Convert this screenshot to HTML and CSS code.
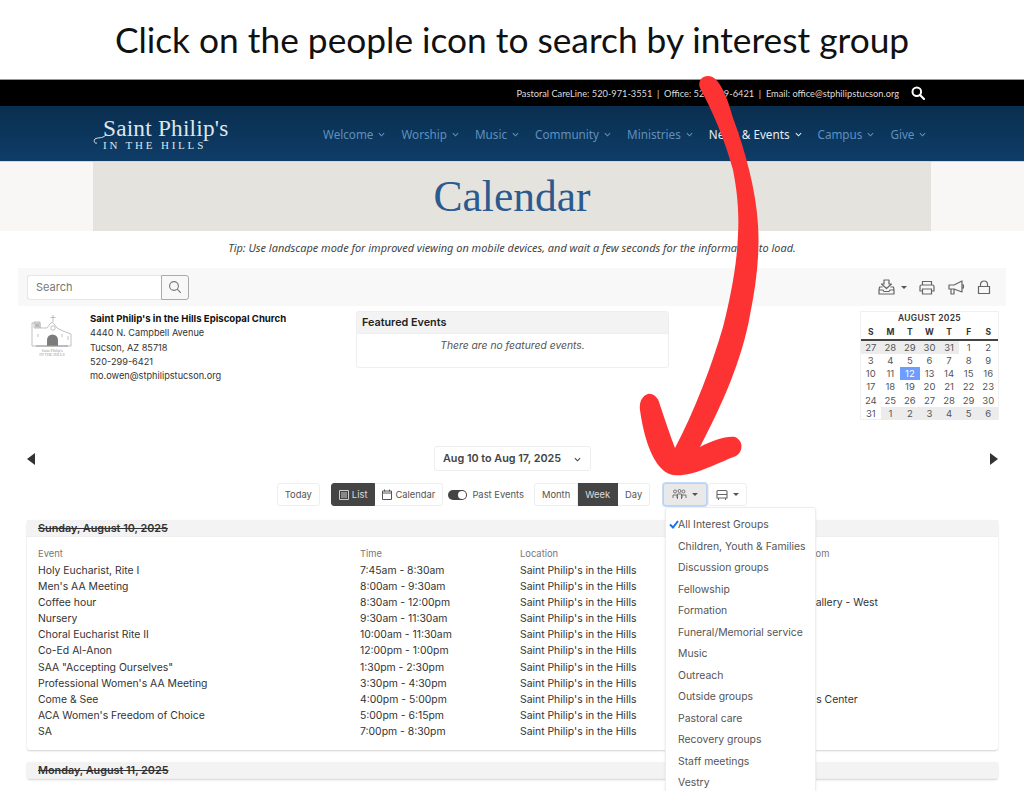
FILE: index.html
```html
<!DOCTYPE html>
<html lang="en">
<head>
  <meta charset="UTF-8" />
  <title>Calendar - Saint Philip's in the Hills</title>
  <link rel="stylesheet" href="styles.css">
</head>
<body>
  <!-- Instruction banner -->
  <div class="banner">Click on the people icon to search by interest group</div>

  <!-- Site header -->
  <div class="topbar">
    <span>Pastoral CareLine: 520-971-3551 &nbsp;|&nbsp; Office: 520-299-6421 &nbsp;|&nbsp; Email: office@stphilipstucson.org</span>
    <svg class="topbar-search" width="14" height="14" viewBox="0 0 14 14"><circle cx="5.8" cy="5.8" r="4.3" fill="none" stroke="#fff" stroke-width="2"/><path d="M9 9l4 4" stroke="#fff" stroke-width="2.2" stroke-linecap="round"/></svg>
  </div>
  <div class="nav">
    <div class="logo">
      <svg class="logo-swash" width="14" height="16" viewBox="0 0 14 16"><path d="M13 4C9 8 5 6 2 8C0 10 2 13 4 12" fill="none" stroke="#dfe6ec" stroke-width="1"/></svg>
      <div class="logo-name">Saint Philip's</div>
      <div class="logo-sub">IN THE HILLS</div>
    </div>
    <div class="nav-items">
      <a class="nav-item">Welcome<svg class="chev" viewBox="0 0 8 5"><path d="M1 1l3 3 3-3"/></svg></a>
      <a class="nav-item">Worship<svg class="chev" viewBox="0 0 8 5"><path d="M1 1l3 3 3-3"/></svg></a>
      <a class="nav-item">Music<svg class="chev" viewBox="0 0 8 5"><path d="M1 1l3 3 3-3"/></svg></a>
      <a class="nav-item">Community<svg class="chev" viewBox="0 0 8 5"><path d="M1 1l3 3 3-3"/></svg></a>
      <a class="nav-item">Ministries<svg class="chev" viewBox="0 0 8 5"><path d="M1 1l3 3 3-3"/></svg></a>
      <a class="nav-item active">News &amp; Events<svg class="chev" viewBox="0 0 8 5"><path d="M1 1l3 3 3-3"/></svg></a>
      <a class="nav-item">Campus<svg class="chev" viewBox="0 0 8 5"><path d="M1 1l3 3 3-3"/></svg></a>
      <a class="nav-item">Give<svg class="chev" viewBox="0 0 8 5"><path d="M1 1l3 3 3-3"/></svg></a>
    </div>
  </div>
  <div class="hero">
    <div class="hero-inner"><h1>Calendar</h1></div>
  </div>
  <p class="tip">Tip: Use landscape mode for improved viewing on mobile devices, and wait a few seconds for the information to load.</p>

  <div class="calendar-page">
    <!-- Search and actions -->
    <div class="toolbar">
      <div class="search">
        <div class="search-input">Search</div>
        <div class="search-btn">
          <svg width="14" height="14" viewBox="0 0 14 14"><circle cx="6" cy="6" r="4.4" fill="none" stroke="#777" stroke-width="1.1"/><path d="M9.2 9.2l3.6 3.6" stroke="#777" stroke-width="1.1"/></svg>
        </div>
      </div>
      <div class="tools">
        <svg class="tool-download" width="17" height="16" viewBox="0 0 17 16"><path d="M6 1h5v4h2.500L8.500 9.500 3.500 5H6zM4.500 8H1.500L1 11v4h15v-4l-.5-3h-3M1 11h4l1 1.500h5l1-1.500h4" fill="none" stroke="#666" stroke-width="1.2" stroke-linejoin="round"/></svg>
        <span class="caret tool-caret"></span>
        <svg class="tool-print" width="16" height="15" viewBox="0 0 16 15"><path d="M3.500 5V1.500h9V5M3.500 11H1V6.500A1.500 1.500 0 0 1 2.500 5h11A1.500 1.500 0 0 1 15 6.500V11h-2.500M3.500 9h9v5h-9z" fill="none" stroke="#666" stroke-width="1.2"/></svg>
        <svg class="tool-horn" width="16" height="15" viewBox="0 0 16 15"><path d="M1 5h5l8-4v11L6 9H1zM3 9v5h3V9M14 5h1.500v3H14" fill="none" stroke="#666" stroke-width="1.2" stroke-linejoin="round"/></svg>
        <svg class="tool-lock" width="14" height="15" viewBox="0 0 14 15"><path d="M1.500 6.500h11v7h-11zM3.500 6.500V4.500a3.500 3.500 0 0 1 7 0v2" fill="none" stroke="#666" stroke-width="1.2"/></svg>
      </div>
    </div>

    <!-- Church info, featured events, mini calendar -->
    <div class="info-row">
      <svg class="church" width="44" height="44" viewBox="0 0 44 44">
        <g fill="none" stroke="#999" stroke-width=".7">
          <path d="M2 8h8v5h7l3-4 2-2 2 2 3 4 6 3 8 3v12H2z"/>
          <path d="M23 0v7M20.500 2.500h5"/>
          <circle cx="23" cy="13" r="2.200"/>
          <path d="M4 7h6v6H4zM32 19v3M8 19v3M38 21v4"/>
        </g>
        <rect x="5" y="8.500" width="4" height="4" fill="#aaa"/>
        <path d="M17 31v-6a5.500 5.500 0 0 1 11 0v6z" fill="#666"/>
        <path d="M6 31h32" stroke="#888" stroke-width="1"/>
        <text x="22" y="37" text-anchor="middle" class="church-text">Saint Philip's</text>
        <text x="22" y="41" text-anchor="middle" class="church-text">IN THE HILLS</text>
      </svg>
      <div class="address">
        <b>Saint Philip's in the Hills Episcopal Church</b>
        <div>4440 N. Campbell Avenue</div>
        <div>Tucson, AZ 85718</div>
        <div>520-299-6421</div>
        <div>mo.owen@stphilipstucson.org</div>
      </div>
      <div class="featured">
        <div class="featured-head">Featured Events</div>
        <div class="featured-body">There are no featured events.</div>
      </div>
      <div class="mini-cal">
        <div class="mini-title">AUGUST 2025</div>
        <div class="mini-grid mini-days"><span>S</span><span>M</span><span>T</span><span>W</span><span>T</span><span>F</span><span>S</span></div>
        <div class="mini-grid">
          <span class="off">27</span><span class="off">28</span><span class="off">29</span><span class="off">30</span><span class="off">31</span><span>1</span><span>2</span>
          <span>3</span><span>4</span><span>5</span><span>6</span><span>7</span><span>8</span><span>9</span>
          <span>10</span><span>11</span><span class="today">12</span><span>13</span><span>14</span><span>15</span><span>16</span>
          <span>17</span><span>18</span><span>19</span><span>20</span><span>21</span><span>22</span><span>23</span>
          <span>24</span><span>25</span><span>26</span><span>27</span><span>28</span><span>29</span><span>30</span>
          <span>31</span><span class="off">1</span><span class="off">2</span><span class="off">3</span><span class="off">4</span><span class="off">5</span><span class="off">6</span>
        </div>
      </div>
    </div>

    <!-- Date range -->
    <div class="date-row">
      <span class="tri-left"></span>
      <div class="date-pick">Aug 10 to Aug 17, 2025<svg class="chev date-chev" viewBox="0 0 8 5"><path d="M1 1l3 3 3-3"/></svg></div>
      <span class="tri-right"></span>
    </div>

    <!-- View controls -->
    <div class="controls">
      <div class="btn today-btn">Today</div>
      <div class="btn-group view-group">
        <div class="btn dark"><svg width="10" height="10" viewBox="0 0 10 10"><path d="M.5.500h9v9h-9zM2 3h6M2 5h6M2 7h6" fill="none" stroke="#ccc" stroke-width="1"/></svg>List</div>
        <div class="btn"><svg width="10" height="11" viewBox="0 0 10 11"><path d="M.5 2h9v8.500h-9zM.5 4h9M2.500.500v2M7.500.500v2" fill="none" stroke="#555" stroke-width="1"/></svg>Calendar</div>
      </div>
      <div class="past"><span class="toggle"></span>Past Events</div>
      <div class="btn-group">
        <div class="btn">Month</div>
        <div class="btn dark">Week</div>
        <div class="btn">Day</div>
      </div>
      <div class="btn icon-btn focused">
        <svg width="15" height="12" viewBox="0 0 15 12"><g fill="none" stroke="#666" stroke-width=".9"><circle cx="3" cy="2.500" r="1.500"/><circle cx="7.500" cy="2" r="1.500"/><circle cx="11.500" cy="2.500" r="1.500"/><path d="M1 9V6h4v3M5.500 10V5h4v5M10 9V6h4v3"/></g></svg>
        <span class="caret"></span>
      </div>
      <div class="btn icon-btn bus-btn">
        <svg width="12" height="12" viewBox="0 0 12 12"><path d="M2 1.500h8a1 1 0 0 1 1 1V9H1V2.500a1 1 0 0 1 1-1zM1 5.500h10M2.500 9v2M9.500 9v2" fill="none" stroke="#666" stroke-width="1.100"/></svg>
        <span class="caret"></span>
      </div>
    </div>

    <!-- Event list -->
    <div class="day-card">
      <div class="day-head">Sunday, August 10, 2025</div>
      <div class="day-body">
        <div class="ev-row ev-label"><span>Event</span><span>Time</span><span>Location</span><span class="room-head">Room</span></div>
        <div class="ev-row"><span>Holy Eucharist, Rite I</span><span>7:45am - 8:30am</span><span>Saint Philip's in the Hills</span></div>
        <div class="ev-row"><span>Men's AA Meeting</span><span>8:00am - 9:30am</span><span>Saint Philip's in the Hills</span></div>
        <div class="ev-row"><span>Coffee hour</span><span>8:30am - 12:00pm</span><span>Saint Philip's in the Hills</span><span class="room-gallery">Gallery - West</span></div>
        <div class="ev-row"><span>Nursery</span><span>9:30am - 11:30am</span><span>Saint Philip's in the Hills</span></div>
        <div class="ev-row"><span>Choral Eucharist Rite II</span><span>10:00am - 11:30am</span><span>Saint Philip's in the Hills</span></div>
        <div class="ev-row"><span>Co-Ed Al-Anon</span><span>12:00pm - 1:00pm</span><span>Saint Philip's in the Hills</span></div>
        <div class="ev-row"><span>SAA "Accepting Ourselves"</span><span>1:30pm - 2:30pm</span><span>Saint Philip's in the Hills</span></div>
        <div class="ev-row"><span>Professional Women's AA Meeting</span><span>3:30pm - 4:30pm</span><span>Saint Philip's in the Hills</span></div>
        <div class="ev-row"><span>Come &amp; See</span><span>4:00pm - 5:00pm</span><span>Saint Philip's in the Hills</span><span class="room-center">Children's Center</span></div>
        <div class="ev-row"><span>ACA Women's Freedom of Choice</span><span>5:00pm - 6:15pm</span><span>Saint Philip's in the Hills</span></div>
        <div class="ev-row"><span>SA</span><span>7:00pm - 8:30pm</span><span>Saint Philip's in the Hills</span></div>
      </div>
    </div>
    <div class="day-card">
      <div class="day-head">Monday, August 11, 2025</div>
    </div>
  </div>

  <!-- Interest group menu, open over the list -->
  <div class="menu">
    <div class="menu-item"><svg class="check" width="10" height="9" viewBox="0 0 10 9"><path d="M1 4.500l3 3 5-6.500" fill="none" stroke="#1a6ff0" stroke-width="2"/></svg>All Interest Groups</div>
    <div class="menu-item">Children, Youth &amp; Families</div>
    <div class="menu-item">Discussion groups</div>
    <div class="menu-item">Fellowship</div>
    <div class="menu-item">Formation</div>
    <div class="menu-item">Funeral/Memorial service</div>
    <div class="menu-item">Music</div>
    <div class="menu-item">Outreach</div>
    <div class="menu-item">Outside groups</div>
    <div class="menu-item">Pastoral care</div>
    <div class="menu-item">Recovery groups</div>
    <div class="menu-item">Staff meetings</div>
    <div class="menu-item">Vestry</div>
  </div>

  <!-- Hand drawn arrow over the screenshot -->
  <svg class="arrow" width="1024" height="791" viewBox="0 0 1024 791">
    <path fill="#fc3233" d="M708 76C700 76 697 84 701 90C712 110 725 140 733 170C738 195 739 215 738 235C737 265 730 300 723 327C712 365 695 410 675 448C670 435 665 420 660 405C658 396 652 393 648 394C642 396 639 402 640 410C643 432 650 458 662 469C670 478 685 477 707 468C720 463 730 458 736 456C743 452 744 441 735 437C725 436 712 441 700 447C722 405 742 360 750 315C756 285 760 255 758 225C756 190 745 150 733 118C728 100 720 76 708 76Z"/>
  </svg>
</body>
</html>
```
FILE: styles.css
```css
html, body {
  height: 791px;
  overflow: hidden;
}
body {
  margin: 0;
  position: relative;
  font-family: Inter, "Liberation Sans", sans-serif;
  font-size: 10.4px;
  color: #333;
  background: #fff;
}
.banner {
  height: 79px;
  text-align: center;
  font-family: Lato, sans-serif;
  font-size: 35.3px;
  line-height: 79px;
  color: #111;
  white-space: nowrap;
}
.topbar {
  height: 27px;
  background: #000;
  border-top: 1px solid #999;
  box-sizing: border-box;
  color: #ddd;
  font-family: Lato, sans-serif;
  font-size: 9.25px;
  display: flex;
  align-items: center;
  justify-content: flex-end;
  padding-right: 99px;
}
.topbar-search {
  margin-left: 12px;
}
.nav {
  height: 56px;
  box-sizing: border-box;
  background: linear-gradient(#0a2e4f, #0e3d68);
  border-bottom: 1px solid #cfd8df;
  display: flex;
  align-items: center;
  padding-left: 93px;
  position: relative;
}
.logo {
  position: relative;
  width: 220px;
  padding-left: 10px;
  color: #dfe6ec;
  font-family: "Liberation Serif", serif;
}
.logo-swash {
  position: absolute;
  left: 0;
  top: 15px;
}
.logo-name {
  font-size: 23.3px;
  line-height: 24px;
  letter-spacing: .2px;
}
.logo-sub {
  font-size: 11px;
  line-height: 11px;
  letter-spacing: 2.8px;
}
.nav-items {
  display: flex;
  gap: 16px;
  font-family: "Noto Sans", sans-serif;
  font-size: 11.7px;
}
.nav-item {
  color: #5f90bd;
  display: flex;
  align-items: center;
}
.nav-item.active {
  color: #e8edf2;
}
.chev {
  width: 7px;
  height: 5px;
  margin: 2px 0 0 5px;
  fill: none;
  stroke: currentColor;
  stroke-width: 1.2;
}
.hero {
  height: 69px;
  background: #f8f7f5;
  padding: 0 93px;
}
.hero-inner {
  height: 100%;
  background: #e4e3de;
  text-align: center;
}
.hero h1 {
  margin: 0;
  font-family: "Liberation Serif", serif;
  font-weight: normal;
  font-size: 43.500px;
  line-height: 69px;
  color: #2a5a8e;
}
.tip {
  margin: 0;
  height: 37px;
  line-height: 33px;
  text-align: center;
  font-family: "Noto Sans", sans-serif;
  font-style: italic;
  font-size: 10.95px;
  color: #444;
}
.calendar-page {
  padding: 0 18px;
}
.toolbar {
  height: 38px;
  background: #f8f8f8;
  display: flex;
  align-items: center;
  justify-content: space-between;
  padding: 0 15px 0 9px;
}
.search {
  display: flex;
  height: 25px;
}
.search-input {
  width: 134px;
  box-sizing: border-box;
  padding-left: 8px;
  background: #fff;
  border: 1px solid #e6e6e6;
  border-right: 0;
  border-radius: 3px 0 0 3px;
  line-height: 23px;
  color: #777;
  font-size: 11px;
}
.search-btn {
  width: 28px;
  box-sizing: border-box;
  border: 1px solid #aaa;
  border-radius: 0 3px 3px 0;
  background: #f8f8f8;
  display: flex;
  align-items: center;
  justify-content: center;
}
.tools {
  display: flex;
  align-items: center;
}
.tool-caret {
  margin: 0 12px 0 6px;
}
.tool-horn {
  margin: 0 13px;
}
.caret {
  display: inline-block;
  width: 0;
  height: 0;
  border-left: 3px solid transparent;
  border-right: 3px solid transparent;
  border-top: 3px solid #555;
}
.info-row {
  display: flex;
  align-items: flex-start;
  height: 135px;
  margin-top: 5px;
  padding-left: 9px;
}
.church {
  flex: none;
  opacity: .85;
  margin: 4px 16px 0 3px;
}
.church-text {
  font-family: "Liberation Serif", serif;
  font-size: 4px;
  fill: #888;
}
.address {
  width: 266px;
  font-size: 9.2px;
  line-height: 14.3px;
  padding-top: 1px;
  color: #333;
}
.address b {
  color: #111;
  font-size: 9.6px;
}
.featured {
  width: 313px;
  height: 57px;
  box-sizing: border-box;
  border: 1px solid #eee;
  border-radius: 3px;
}
.featured-head {
  height: 21px;
  background: #f3f3f3;
  border-bottom: 1px solid #eee;
  padding-left: 5px;
  font-weight: 600;
  font-size: 10.8px;
  line-height: 21px;
  color: #222;
}
.featured-body {
  text-align: center;
  font-style: italic;
  font-size: 10.3px;
  line-height: 22px;
  color: #555;
}
.mini-cal {
  width: 139px;
  margin-left: 191px;
  border: 1px solid #f0f0f0;
  box-sizing: border-box;
  height: 109px;
  font-size: 9.5px;
  color: #555;
}
.mini-title {
  height: 13px;
  text-align: center;
  font-weight: 600;
  font-size: 8.5px;
  line-height: 13px;
  letter-spacing: .3px;
  color: #333;
}
.mini-grid {
  display: grid;
  grid-template-columns: repeat(7, 1fr);
  grid-auto-rows: 13.3px;
}
.mini-grid span {
  text-align: center;
  line-height: 13.3px;
}
.mini-days {
  border-bottom: 2px solid #444;
  font-weight: 700;
  font-size: 8.5px;
  color: #333;
  height: 13px;
  padding-top: 1px;
  box-sizing: content-box;
  height: 12.5px;
}
.mini-grid .off {
  background: #ececec;
}
.mini-grid .today {
  background: #6d9dff;
  color: #fff;
}
.date-row {
  height: 25px;
  display: flex;
  align-items: center;
  justify-content: space-between;
  padding: 0 8px 0 9px;
}
.tri-left {
  border-right: 8px solid #333;
  border-top: 6px solid transparent;
  border-bottom: 6px solid transparent;
}
.tri-right {
  border-left: 8px solid #333;
  border-top: 6px solid transparent;
  border-bottom: 6px solid transparent;
}
.date-pick {
  width: 157px;
  height: 25px;
  box-sizing: border-box;
  border: 1px solid #eee;
  border-radius: 3px;
  padding-left: 8px;
  font-weight: 600;
  font-size: 10.8px;
  line-height: 23px;
  color: #444;
  display: flex;
  align-items: center;
}
.date-chev {
  margin-left: 13px;
}
.controls {
  display: flex;
  justify-content: center;
  align-items: center;
  height: 23px;
  margin: 12px 0 14px;
  font-size: 9.4px;
  color: #555;
}
.btn {
  height: 23px;
  box-sizing: border-box;
  padding: 0 7px;
  border: 1px solid #eee;
  border-radius: 3px;
  display: flex;
  align-items: center;
  gap: 3px;
  background: #fff;
}
.btn.dark {
  background: #444;
  border-color: #444;
  color: #ddd;
}
.btn-group {
  display: flex;
}
.btn-group .btn {
  border-radius: 0;
  border-left-width: 0;
}
.btn-group .btn:first-child {
  border-left-width: 1px;
  border-radius: 3px 0 0 3px;
}
.btn-group .btn:last-child {
  border-radius: 0 3px 3px 0;
}
.today-btn {
  margin-right: 11px;
}
.past {
  display: flex;
  align-items: center;
  gap: 5px;
  margin: 0 10px 0 5px;
}
.toggle {
  width: 19px;
  height: 10px;
  border-radius: 5px;
  background: #444;
  position: relative;
}
.toggle::after {
  content: "";
  position: absolute;
  right: 1px;
  top: 1px;
  width: 8px;
  height: 8px;
  border-radius: 50%;
  background: #fff;
}
.icon-btn {
  width: 44px;
  justify-content: center;
  gap: 5px;
  padding: 0;
}
.focused {
  margin-left: 13px;
  background: #e9e9e9;
  border-color: #b9d3f7;
  box-shadow: 0 0 0 1px #c5dbfa;
}
.bus-btn {
  width: 39px;
  margin-left: 1px;
}
.day-card {
  margin: 0 8px 12px 9px;
  border-radius: 3px;
  box-shadow: 0 1px 2px rgba(0,0,0,0.18);
  background: #fff;
}
.day-head {
  height: 17px;
  background: #f3f3f3;
  padding-left: 11px;
  font-weight: 600;
  font-size: 10.8px;
  line-height: 17px;
  color: #333;
  text-decoration: line-through;
  border-bottom: 1px solid #eee;
  box-sizing: border-box;
}
.day-body {
  padding: 9px 11px 10px;
}
.ev-row {
  display: grid;
  grid-template-columns: 322px 160px 160px 1fr;
  line-height: 16.08px;
  color: #333;
  white-space: nowrap;
}
.ev-label {
  color: #777;
  font-size: 9.4px;
  margin-bottom: 1px;
}
.room-head {
  padding-left: 124px;
}
.room-gallery {
  padding-left: 128px;
}
.room-center {
  padding-left: 92px;
}
.menu {
  position: absolute;
  left: 665px;
  top: 507px;
  width: 151px;
  box-sizing: border-box;
  padding-top: 6px;
  background: #fff;
  border: 1px solid #eee;
  border-radius: 3px;
  box-shadow: 0 1px 3px rgba(0,0,0,0.08);
}
.menu-item {
  position: relative;
  height: 21.5px;
  line-height: 21.5px;
  padding-left: 12px;
  color: #555;
  white-space: nowrap;
}
.check {
  position: absolute;
  left: 3px;
  top: 6px;
}
.arrow {
  position: absolute;
  left: 0;
  top: 0;
  pointer-events: none;
}
```
